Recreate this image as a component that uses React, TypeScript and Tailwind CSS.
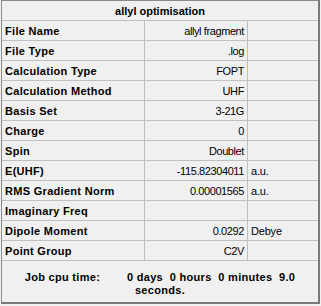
import React from 'react';

type Row = { label: string; value?: string; unit?: string };

const rows: Row[] = [
  { label: 'File Name', value: 'allyl fragment' },
  { label: 'File Type', value: '.log' },
  { label: 'Calculation Type', value: 'FOPT' },
  { label: 'Calculation Method', value: 'UHF' },
  { label: 'Basis Set', value: '3-21G' },
  { label: 'Charge', value: '0' },
  { label: 'Spin', value: 'Doublet' },
  { label: 'E(UHF)', value: '-115.82304011', unit: 'a.u.' },
  { label: 'RMS Gradient Norm', value: '0.00001565', unit: 'a.u.' },
  { label: 'Imaginary Freq' },
  { label: 'Dipole Moment', value: '0.0292', unit: 'Debye' },
  { label: 'Point Group', value: 'C2V' },
];

const SummaryRow: React.FC<{ row: Row }> = ({ row }) => (
  <div className="flex h-[20px] border-b border-[#c0c0c0]">
    <div className="w-[143px] shrink-0 border-r border-[#c0c0c0] pl-[3px] pt-px flex items-center font-bold text-[11px] tracking-[0.3px]">
      {row.label}
    </div>
    <div className="w-[103px] shrink-0 border-r border-[#c0c0c0] pr-[3px] pt-px flex items-center justify-end text-[11px] tracking-[-0.4px]">
      {row.value}
    </div>
    <div className="flex-1 pl-[3px] pt-px flex items-center text-[11px] tracking-[-0.2px]">
      {row.unit}
    </div>
  </div>
);

export default function App() {
  return (
    <div className="w-[321px] h-[306px] bg-[#f0f0f0] text-black" style={{ fontFamily: '"Liberation Sans", Arial, sans-serif' }}>
      <div className="ml-px w-[319px] h-[304px] border-l border-t border-[#8a8a8a] border-r-2 border-b-2 border-r-[#7a7a7a] border-b-[#7a7a7a] flex flex-col">
        <div className="h-[20px] border-b border-[#c0c0c0] flex items-center justify-center pt-px font-bold text-[11px]">
          allyl optimisation
        </div>
        {rows.map((r) => (
          <SummaryRow key={r.label} row={r} />
        ))}
        <div className="flex-1 pt-[10px] text-center font-bold text-[11px] tracking-[0.3px] leading-[13px] whitespace-pre">
          {'Job cpu time:        0 days  0 hours  0 minutes  9.0\nseconds.'}
        </div>
      </div>
    </div>
  );
}
